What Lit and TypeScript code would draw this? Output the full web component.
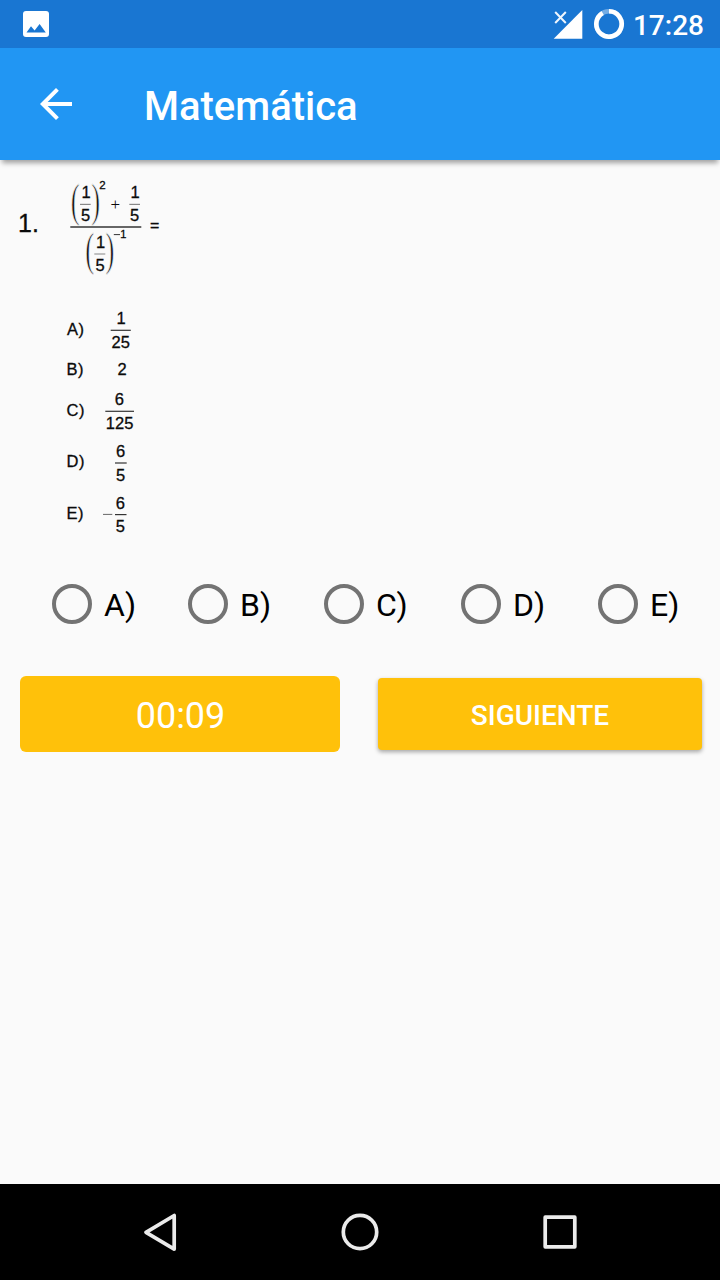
import { LitElement, html, svg, css } from "lit";
import { customElement } from "lit/decorators.js";

const num = (x: number, y: number, s: string, size = 16.5) =>
  svg`<text class="mid" x=${x} y=${y} font-size=${size}>${s}</text>`;
const bar = (x1: number, x2: number, y: number, color = "#333", w = 1.2) =>
  svg`<line x1=${x1} x2=${x2} y1=${y} y2=${y} stroke=${color} stroke-width=${w} />`;
const fence = (x: number, y: number, s: string) =>
  svg`<text class="fence" transform="translate(${x} ${y}) scale(0.58 1)">${s}</text>`;

@customElement("exam-question")
class ExamQuestion extends LitElement {
  static styles = css`
    :host { display: block; height: 400px; }
    svg { display: block; }
    text { font-family: "Liberation Sans", Arial, sans-serif; fill: #0a0a0a; stroke: #0a0a0a; stroke-width: 0.3px; }
    .mid { text-anchor: middle; }
    .fence { font-family: "Liberation Serif", serif; font-size: 46px; fill: #111; stroke: #fafafa; stroke-width: 0.9px; }
    .key { font-size: 16.5px; letter-spacing: 0.5px; }
    .plus { font-family: "Liberation Serif", serif; font-size: 17px; text-anchor: middle; stroke: none; }
  `;
  render() {
    return html`<svg width="720" height="400" viewBox="0 160 720 400">
      <text x="18" y="231.5" font-size="25">1.</text>
      ${fence(70.8, 215.6, "(")} ${num(86, 198.3, "1")} ${bar(80, 90.7, 204.4, "#888")}
      ${num(85.5, 221, "5")} ${fence(91.2, 215.6, ")")} ${num(102.5, 188.5, "2", 11.5)}
      <text class="plus" x="115.3" y="209.5">+</text>
      ${num(135, 198.3, "1")} ${bar(129.3, 140, 204.4, "#888")} ${num(134.6, 221, "5")}
      ${bar(70.3, 141.3, 227, "#666", 1.8)}
      <text x="150" y="230.8" font-size="16">=</text>
      ${fence(85.2, 264.8, "(")} ${num(100.5, 247.8, "1")} ${bar(94.3, 105.3, 254, "#999")}
      ${num(100, 271, "5")} ${fence(105.6, 264.8, ")")}
      ${bar(113.8, 120, 234.6, "#333", 1)} ${num(123.3, 237.5, "1", 11)}

      <text class="key" x="67" y="335">A)</text>
      ${num(121, 324.3, "1")} ${bar(110.7, 130.8, 330.3)} ${num(120.8, 347.7, "25")}
      <text class="key" x="66.5" y="375.4">B)</text>
      ${num(122, 375.4, "2")}
      <text class="key" x="66.5" y="416.2">C)</text>
      ${num(119.3, 404.7, "6")} ${bar(105.3, 134, 411.3)} ${num(119.6, 428.6, "125")}
      <text class="key" x="66.5" y="467.3">D)</text>
      ${num(120.7, 456.6, "6")} ${bar(115, 126.7, 463)} ${num(120.7, 480.5, "5")}
      <text class="key" x="66.5" y="519.3">E)</text>
      ${bar(103, 112.3, 514.4, "#666", 1)}
      ${num(120.3, 508.5, "6")} ${bar(115, 126.5, 514.6)} ${num(120.3, 532.1, "5")}
    </svg>`;
  }
}

@customElement("app-root")
class AppRoot extends LitElement {
  static styles = css`
    :host {
      display: flex; flex-direction: column; width: 720px; height: 1280px;
      background: #fafafa; font-family: Roboto, sans-serif; overflow: hidden;
    }
    svg { display: block; flex: none; }
    .status {
      height: 48px; background: #1976d2; color: #fff; display: flex; align-items: center;
      padding: 0 16px 0 22px; box-sizing: border-box; flex: none;
    }
    .signal { margin-left: auto; margin-right: 10px; }
    .clock { font-size: 28px; font-weight: 500; line-height: 32px; margin-left: 8px; padding-top: 3px; }
    .bar {
      height: 112px; flex: none; background: #2196f3; color: #fff; display: flex; align-items: center;
      padding-left: 32px; box-shadow: 0 5px 5px -2px rgba(0, 0, 0, 0.36);
    }
    .title { font-size: 40px; font-weight: 500; margin: 6px 0 0 64px; line-height: 48px; }
    .choices {
      display: grid; grid-template-columns: 136px 136px 137px 137px 120px; margin-left: 52px;
      height: 88px; align-items: center; flex: none;
    }
    .choice { display: flex; align-items: center; font-size: 32px; line-height: 38px; color: #000; }
    .ring { width: 40px; height: 40px; box-sizing: border-box; border: 4px solid #737373; border-radius: 50%; margin-right: 12px; }
    .label { padding-top: 2px; }
    .actions { display: flex; align-items: center; padding-left: 20px; margin-top: 28px; gap: 38px; height: 76px; flex: none; color: #fff; }
    .timer {
      width: 320px; height: 76px; border-radius: 6px; background: #ffc10a; font-size: 36px;
      display: flex; align-items: center; justify-content: center; padding: 3px 0 0 1px; box-sizing: border-box;
    }
    .next {
      width: 324px; height: 72px; border: 0; border-radius: 4px; background: #ffc10a; color: #fff;
      font: 500 28px Roboto, sans-serif; padding: 2px 0 0; box-shadow: 0 2px 4px rgba(0, 0, 0, 0.34);
    }
    .nav { height: 96px; margin-top: auto; background: #000; flex: none; display: flex; justify-content: center; }
  `;
  render() {
    return html`
      <div class="status">
        <svg width="28" height="28" viewBox="0 0 28 28">
          <rect x="1" y="1" width="26" height="26" rx="3" fill="#fff" />
          <path d="M4.5 22.5 9 16.3l3.6 4.2 5-6.5 6.2 8.5z" fill="#1976d2" />
        </svg>
        <svg class="signal" width="30" height="30" viewBox="0 0 30 30">
          <path d="M29.3 1v28.7H.7z" fill="#fff" />
          <path d="m2.2 3 10.6 11M12.8 3 2.2 14" stroke="#1976d2" stroke-width="4.5" />
          <path d="m2.2 3 10.6 11M12.8 3 2.2 14" stroke="#f0f6fd" stroke-width="2" />
        </svg>
        <svg width="32" height="32" viewBox="0 0 32 32">
          <circle cx="16" cy="16" r="12.7" fill="none" stroke="#75ade4" stroke-width="4.6" />
          <path d="M16 3.3A12.7 12.7 0 1 1 9.65 5" fill="none" stroke="#fff" stroke-width="4.6" />
        </svg>
        <span class="clock">17:28</span>
      </div>
      <div class="bar">
        <svg width="48" height="48" viewBox="0 0 24 24">
          <path fill="#fff" d="M20 11H7.83l5.59-5.59L12 4l-8 8 8 8 1.41-1.41L7.83 13H20v-2z" />
        </svg>
        <span class="title">Matemática</span>
      </div>
      <exam-question></exam-question>
      <div class="choices">
        ${["A)", "B)", "C)", "D)", "E)"].map(
          (t) => html`<div class="choice"><span class="ring"></span><span class="label">${t}</span></div>`
        )}
      </div>
      <div class="actions">
        <div class="timer">00:09</div>
        <button class="next">SIGUIENTE</button>
      </div>
      <div class="nav">
        <svg width="480" height="96" viewBox="0 0 480 96" fill="none" stroke="#ebebeb" stroke-width="3.7" stroke-linejoin="round">
          <path d="M26 48.3 54.2 31.5v33.6z" />
          <circle cx="240" cy="48" r="16.7" />
          <rect x="425.2" y="33.2" width="29.6" height="29.6" />
        </svg>
      </div>
    `;
  }
}
